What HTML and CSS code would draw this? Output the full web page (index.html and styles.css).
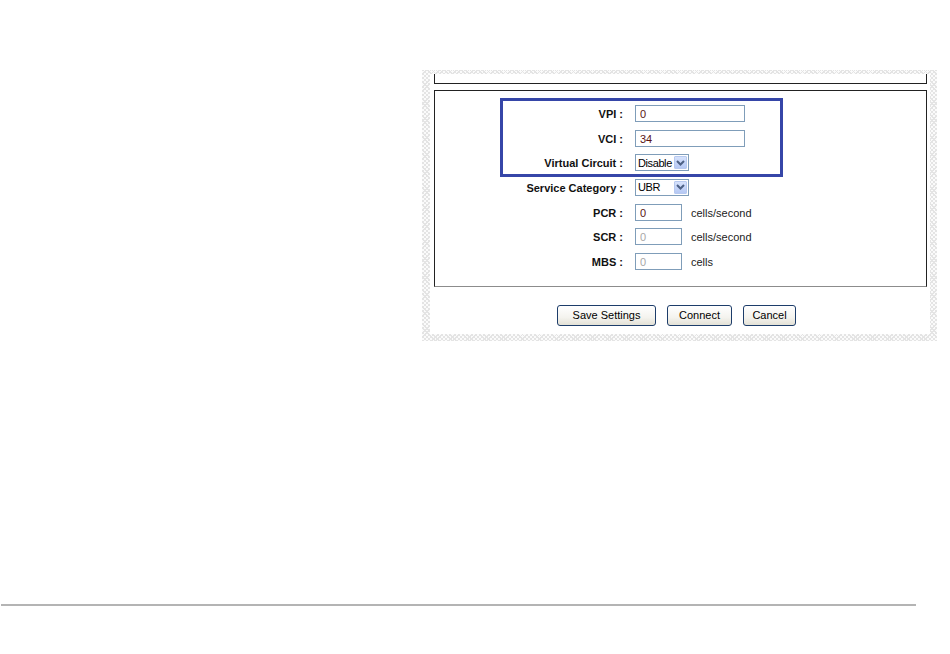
FILE: index.html
```html
<!DOCTYPE html>
<html lang="en">
<head>
  <meta charset="utf-8">
  <title>ATM Settings</title>
  <link rel="stylesheet" href="styles.css">
</head>
<body>
  <div class="page">
    <div class="frame">
      <div class="frame-inner">
        <div class="panel-top"></div>

        <div class="panel">
          <div class="highlight"></div>
          <div class="form-grid">
            <label class="form-label">VPI :</label>
            <div class="form-field"><input class="text-input" type="text" value="0"></div>

            <label class="form-label">VCI :</label>
            <div class="form-field"><input class="text-input" type="text" value="34"></div>

            <label class="form-label">Virtual Circuit :</label>
            <div class="form-field">
              <div class="select">
                <span class="select-value">Disable</span>
                <span class="select-arrow">
                  <svg width="9" height="6" viewBox="0 0 9 6"><path d="M1 1 L4.5 4.5 L8 1" fill="none" stroke="#4d6185" stroke-width="2"/></svg>
                </span>
              </div>
            </div>

            <label class="form-label">Service Category :</label>
            <div class="form-field">
              <div class="select">
                <span class="select-value">UBR</span>
                <span class="select-arrow">
                  <svg width="9" height="6" viewBox="0 0 9 6"><path d="M1 1 L4.5 4.5 L8 1" fill="none" stroke="#4d6185" stroke-width="2"/></svg>
                </span>
              </div>
            </div>

            <label class="form-label">PCR :</label>
            <div class="form-field">
              <input class="text-input short" type="text" value="0">
              <span class="unit">cells/second</span>
            </div>

            <label class="form-label">SCR :</label>
            <div class="form-field">
              <input class="text-input short" type="text" value="0" disabled>
              <span class="unit">cells/second</span>
            </div>

            <label class="form-label">MBS :</label>
            <div class="form-field">
              <input class="text-input short" type="text" value="0" disabled>
              <span class="unit">cells</span>
            </div>
          </div>
        </div>

        <div class="button-row">
          <button class="btn save">Save Settings</button>
          <button class="btn connect">Connect</button>
          <button class="btn cancel">Cancel</button>
        </div>
      </div>
    </div>

    <div class="footer-line"></div>
  </div>
</body>
</html>
```

FILE: styles.css
```css
* {
  margin: 0;
  padding: 0;
  box-sizing: border-box;
}

body {
  font-family: 'Liberation Sans', Arial, sans-serif;
  background: #ffffff;
  color: #000000;
}

.page {
  padding-top: 70px;
}

/* torn screenshot edge */
.frame {
  margin-left: 422px;
  width: 515px;
  padding: 4px 7px 7px 8px;
  background-color: #fbfbfb;
  background-image:
    repeating-linear-gradient(45deg, #e4e4e4 0 1px, transparent 1px 3px),
    repeating-linear-gradient(-45deg, #e4e4e4 0 1px, transparent 1px 3px);
}

.frame-inner {
  background: #ffffff;
  padding: 0 3px 8px 4px;
}

.panel-top {
  height: 10px;
  border: 1px solid #222222;
  border-top: none;
}

.panel {
  position: relative;
  margin-top: 6px;
  border: 1px solid #222222;
  border-bottom-color: #8c8c8c;
  padding: 14px 0 16px;
}

.highlight {
  position: absolute;
  left: 65px;
  top: 7px;
  width: 283px;
  height: 79px;
  border: 3px solid #3646a8;
  pointer-events: none;
}

.form-grid {
  display: grid;
  grid-template-columns: 188px auto;
  grid-auto-rows: 17px;
  column-gap: 12px;
  row-gap: 7.67px;
}

.form-label {
  font-size: 11px;
  font-weight: bold;
  color: #111111;
  text-align: right;
  line-height: 17px;
  padding-top: 1px;
  white-space: nowrap;
}

.form-field {
  display: flex;
  align-items: center;
  gap: 9px;
  height: 17px;
}

.text-input {
  width: 110px;
  height: 17px;
  border: 1px solid #7f9db9;
  padding: 1px 4px 0;
  font-family: inherit;
  font-size: 11px;
  color: #5a1414;
  background: #ffffff;
  outline: none;
}

.text-input.short {
  width: 47px;
}

.text-input:disabled {
  color: #a8a8a8;
  background: #ffffff;
}

.unit {
  font-size: 11px;
  color: #222222;
  padding-top: 1px;
}

.select {
  display: flex;
  align-items: center;
  justify-content: space-between;
  width: 54px;
  height: 17px;
  border: 1px solid #7f9db9;
  background: #ffffff;
  padding: 1px 1px 1px 2px;
}

.select-value {
  font-size: 11px;
  letter-spacing: -0.4px;
  color: #000000;
}

.select-arrow {
  display: flex;
  align-items: center;
  justify-content: center;
  width: 13px;
  height: 13px;
  background: linear-gradient(#d6e2fc, #b5c8f4);
  border: 1px solid #b7c9ef;
  border-radius: 1px;
}

.button-row {
  display: flex;
  justify-content: center;
  gap: 11px;
  margin-top: 18px;
  padding-right: 8px;
}

.btn {
  height: 21px;
  border: 1px solid #1d3d6a;
  border-radius: 3px;
  background: linear-gradient(#ffffff, #f4f3ee 60%, #e3e1d6);
  font-family: inherit;
  font-size: 11px;
  color: #000000;
  cursor: pointer;
}

.btn.save {
  width: 99px;
}

.btn.connect {
  width: 65px;
}

.btn.cancel {
  width: 53px;
}

.footer-line {
  margin-top: 263px;
  margin-left: 1px;
  width: 915px;
  height: 2px;
  background: #b4b4b4;
}
```
